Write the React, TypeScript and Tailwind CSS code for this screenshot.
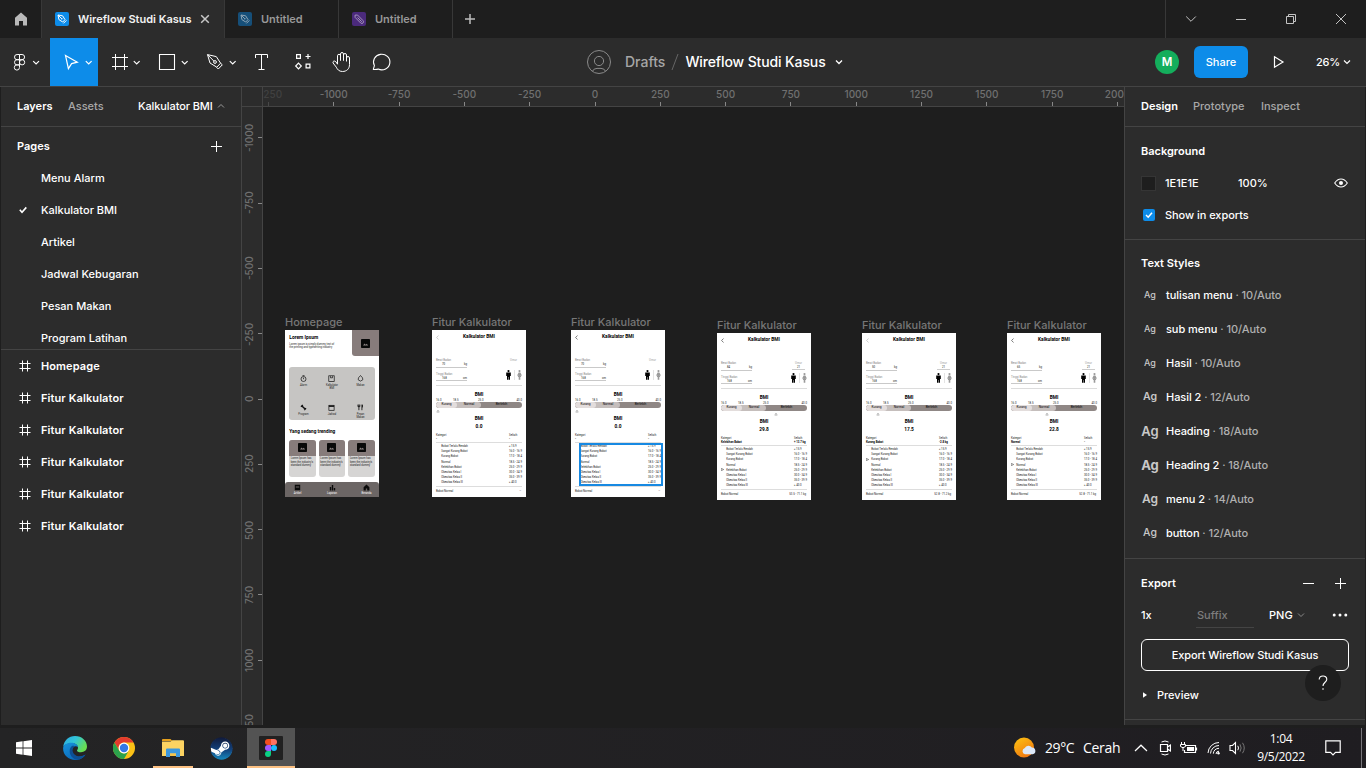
import React from "react";
import { FaSteam } from "react-icons/fa";

type SvgProps = { w: number; h: number; children: React.ReactNode; className?: string; sw?: number };
function Ico({ w, h, children, className = "", sw = 1 }: SvgProps) {
  return (
    <svg width={w} height={h} viewBox={`0 0 ${w} ${h}`} fill="none" stroke="currentColor" strokeWidth={sw} className={`block shrink-0 ${className}`}>
      {children}
    </svg>
  );
}

/* ---------- Title bar ---------- */

function FileGlyph({ kind }: { kind: "active" | "pen" | "jam" }) {
  const bg = kind === "active" ? "bg-[#0d8ce9]" : kind === "pen" ? "bg-[#164f79]" : "bg-[#4b2a7c]";
  const fg = kind === "active" ? "text-white" : kind === "pen" ? "text-[#8fa5b5]" : "text-[#a394b8]";
  return (
    <div className={`size-3.5 shrink-0 rounded-[2px] ${bg} ${fg}`}>
      {kind === "jam" ? (
        <Ico w={14} h={14}>
          <path d="M3 3.2 L5.5 3 L11 8.6 A1.6 1.6 0 0 1 8.7 11 L3.1 5.4 Z M5.5 5.5 L9.8 9.8" strokeLinejoin="round" />
        </Ico>
      ) : (
        <Ico w={14} h={14}>
          <path d="M3 3 L7.6 3.8 L10 7.6 L7.7 10 L3.9 7.6 Z M3 3 L6.6 6.6 M8.4 11.4 L11.4 8.4" strokeLinejoin="round" />
          <circle cx="6.8" cy="6.8" r="0.8" fill="currentColor" stroke="none" />
        </Ico>
      )}
    </div>
  );
}

function TitleBar() {
  return (
    <div className="flex h-[38px] shrink-0 bg-[#1e1e1e] text-[11px] font-semibold">
      <div className="flex w-[42px] shrink-0 items-center justify-center border-r border-[#383838] text-[#b9b9b9]">
        <Ico w={14} h={14}>
          <path d="M7 0.5 L13 5.7 V13.5 H9 V9 H5 V13.5 H1 V5.7 Z" fill="currentColor" stroke="none" />
        </Ico>
      </div>
      <div className="flex w-[182px] shrink-0 items-center bg-[#2c2c2c] pl-[13px] text-[#f2f2f2]">
        <FileGlyph kind="active" />
        <span className="ml-[9px] w-[113px] whitespace-nowrap">Wireflow Studi Kasus</span>
        <Ico w={10} h={10} className="ml-[9px] text-[#c8c8c8]" sw={1.5}>
          <path d="M1.2 1.2 L8.8 8.8 M8.8 1.2 L1.2 8.8" />
        </Ico>
      </div>
      <div className="flex w-[115px] shrink-0 items-center border-x border-[#383838] pl-[13px] text-[#989898]">
        <FileGlyph kind="pen" />
        <span className="ml-[9px]">Untitled</span>
      </div>
      <div className="flex w-[114px] shrink-0 items-center border-r border-[#383838] pl-[13px] text-[#989898]">
        <FileGlyph kind="jam" />
        <span className="ml-[9px]">Untitled</span>
      </div>
      <div className="flex w-[34px] items-center justify-center text-[#bdbdbd]">
        <Ico w={10} h={10} sw={1.5}>
          <path d="M5 0 V10 M0 5 H10" />
        </Ico>
      </div>
      <div className="ml-auto flex w-[201px] items-center border-l border-[#383838] text-[#c4c4c4]">
        <div className="flex w-[50px] justify-center"><Ico w={12} h={12}><path d="M1.2 3.5 L6 8.3 L10.8 3.5" /></Ico></div>
        <div className="flex w-[50px] justify-center"><Ico w={12} h={12}><path d="M1 6.5 H11" /></Ico></div>
        <div className="flex w-[50px] justify-center"><Ico w={12} h={12}><path d="M1.5 3.5 H8.5 V10.5 H1.5 Z M3.5 3.5 V1.5 H10.5 V8.5 H8.5" /></Ico></div>
        <div className="flex w-[50px] justify-center"><Ico w={12} h={12}><path d="M1 1 L11 11 M11 1 L1 11" /></Ico></div>
      </div>
    </div>
  );
}

/* ---------- Toolbar ---------- */

const CHEV = "M35.8 23.1 L38.7 25.9 L41.6 23.1";

function ToolBar() {
  return (
    <div className="flex h-[49px] shrink-0 items-center border-b border-[#444] bg-[#2c2c2c] text-white">
      <div className="flex w-[586px] shrink-0 pl-0.5">
        <Ico w={48} h={48}>
          <path d="M17.5 16.5 H15.1 a2.6 2.6 0 0 0 0 5.2 H17.5 Z M17.5 16.5 H20 a2.6 2.6 0 0 1 0 5.2 H17.5 M17.5 21.7 H15.1 a2.6 2.6 0 0 0 0 5.2 H17.5 Z M17.5 26.9 H15.1 a2.6 2.6 0 1 0 2.4 2.6 Z" />
          <circle cx="20.1" cy="24.3" r="2.6" />
          <path d="M31.2 23.1 L34.1 25.9 L37 23.1" strokeWidth="1.2" />
        </Ico>
        <div className="bg-[#0d8ce9]">
          <Ico w={48} h={48}>
            <path d="M15.5 17.5 L27.3 24.2 L21.6 25.6 L18.4 30.6 Z" strokeWidth="1.2" strokeLinejoin="miter" />
            <path d={CHEV} strokeWidth="1.2" />
          </Ico>
        </div>
        <Ico w={48} h={48}>
          <path d="M17.5 16 V32 M26.5 16 V32 M14 19.5 H30 M14 28.5 H30" />
          <path d={CHEV} strokeWidth="1.2" />
        </Ico>
        <Ico w={48} h={48}>
          <path d="M13.5 16.5 H28.5 V31.5 H13.5 Z" strokeWidth="1.1" />
          <path d={CHEV} strokeWidth="1.2" />
        </Ico>
        <Ico w={48} h={48}>
          <path d="M13.5 16.6 L22.3 18.6 L26.6 25.2 L22.8 29.2 L16 25 Z M13.5 16.6 L20 23.2 M22.6 29.3 L24.3 31 L28.3 26.8 L26.6 25.2" strokeLinejoin="round" />
          <circle cx="21" cy="24" r="1.4" />
          <path d={CHEV} strokeWidth="1.2" />
        </Ico>
        <Ico w={40} h={48}>
          <path d="M13.5 20 V16.5 H25.5 V20 M19.5 16.5 V31.5 M16.5 31.5 H22.5" />
        </Ico>
        <Ico w={40} h={48} sw={1.2}>
          <path d="M14.6 16.6 H18.4 V20.4 H14.6 Z M24.1 26.1 H27.9 V29.9 H24.1 Z M26 16 V21 M23.5 18.5 H28.5 M16.5 25.2 L19.3 28 L16.5 30.8 L13.7 28 Z" />
        </Ico>
        <Ico w={40} h={48}>
          <path d="M15.5 24 V17.8 a1.5 1.5 0 0 1 3 0 V22.5 M18.5 22.5 V16 a1.5 1.5 0 0 1 3 0 V22.5 M21.5 22.5 V17 a1.5 1.5 0 0 1 3 0 V23.5 M24.5 20 a1.5 1.5 0 0 1 3 0 V26.5 C27.5 31 24.5 33.5 20.5 33.5 C17 33.5 15.4 31.5 14.3 29.2 L11 24.9 C10.4 23.2 12.6 22.3 13.8 23.7 L15.5 26.2 V23" strokeLinejoin="round" />
        </Ico>
        <Ico w={40} h={48}>
          <path d="M11.3 31.4 L12.4 27.6 A8.2 7.8 0 1 1 16.2 31.1 Q14.4 31.6 11.3 31.4 Z" strokeLinejoin="round" strokeWidth="1.1" />
        </Ico>
      </div>
      <div className="flex items-center text-[14px]">
        <Ico w={26} h={26} className="text-[#8a8a8a]">
          <circle cx="13" cy="13" r="11.5" />
          <circle cx="13" cy="12" r="4.6" />
          <path d="M6.5 22.3 Q7.5 19.4 11 19.4 H15 Q18.5 19.4 19.5 22.3" />
        </Ico>
        <span className="ml-[13px] text-[#a6a6a6]">Drafts</span>
        <Ico w={8} h={18} className="ml-[6px] text-[#666]"><path d="M7 1 L1 17" /></Ico>
        <span className="ml-[6px] w-[141px] whitespace-nowrap tracking-[-0.12px]">Wireflow Studi Kasus</span>
        <Ico w={8} h={6} className="ml-[9px]"><path d="M1 1.5 L4 4.5 L7 1.5" strokeWidth="1.3" /></Ico>
      </div>
      <div className="ml-auto flex items-center">
        <div className="flex size-6 items-center justify-center rounded-full bg-[#14ae5c] text-[11.5px] font-semibold">M</div>
        <div className="ml-[15px] flex h-8 w-[54px] items-center justify-center rounded-md bg-[#0d8ce9] text-[11px] font-medium">Share</div>
        <Ico w={12} h={14} className="ml-[25px]"><path d="M1.5 1.8 L10 7 L1.5 12.2 Z" strokeWidth="1.2" /></Ico>
        <span className="ml-[31px] w-[23px] whitespace-nowrap text-[11px] tracking-[-0.2px]">26%</span>
        <Ico w={8} h={6} className="mr-[15px] ml-1"><path d="M1 1.5 L4 4.5 L7 1.5" strokeWidth="1.2" /></Ico>
      </div>
    </div>
  );
}

/* ---------- Left panel ---------- */

const PAGES = ["Menu Alarm", "Kalkulator BMI", "Artikel", "Jadwal Kebugaran", "Pesan Makan", "Program Latihan"];
const LAYERS = ["Homepage", "Fitur Kalkulator", "Fitur Kalkulator", "Fitur Kalkulator", "Fitur Kalkulator", "Fitur Kalkulator"];

function LeftPanel() {
  return (
    <div className="flex w-[242px] shrink-0 flex-col border-r border-l border-r-[#444] border-l-[#1e1e1e] bg-[#2c2c2c] text-white">
      <div className="flex h-10 shrink-0 items-center border-b border-[#444] pb-0.5 pl-4">
        <span className="w-[51px] font-semibold">Layers</span>
        <span className="w-[70px] font-medium text-[#a8a8a8]">Assets</span>
        <span className="whitespace-nowrap font-medium tracking-[-0.1px]">Kalkulator BMI</span>
        <Ico w={8} h={6} className="ml-1 text-[#999]"><path d="M1 4.5 L4 1.5 L7 4.5" /></Ico>
      </div>
      <div className="h-[222px] shrink-0 overflow-hidden pt-[3px]">
        <div className="flex h-8 items-center justify-between pr-[19px] pl-4 font-semibold">
          Pages
          <Ico w={11} h={11}><path d="M5.5 0 V11 M0 5.5 H11" /></Ico>
        </div>
        {PAGES.map((p, i) => (
          <div key={p} className="flex h-8 items-center pl-[18px]">
            <div className="w-[22px]">
              {i === 1 && <Ico w={8} h={8} sw={1.6}><path d="M0.8 3.8 L3 6.2 L7.3 1.4" /></Ico>}
            </div>
            {p}
          </div>
        ))}
      </div>
      <div className="flex-1 border-t border-[#444] tracking-[0.1px]">
        {LAYERS.map((l, i) => (
          <div key={i} className="flex h-8 items-center pl-[18px] font-semibold">
            <Ico w={12} h={12} className="mr-2.5"><path d="M3.5 0.5 V11.5 M8.5 0.5 V11.5 M0.5 3.5 H11.5 M0.5 8.5 H11.5" /></Ico>
            {l}
          </div>
        ))}
      </div>
    </div>
  );
}

/* ---------- Artboards ---------- */

type Calc = {
  value: string;
  category: string;
  diff: string;
  weight: string;
  height: string;
  age: string;
  pick: number;
  pointer: number;
  range: string;
  faintBack?: boolean;
  selected?: boolean;
};

const ROWS: [string, string][] = [
  ["Bobot Terlalu Rendah", "≤ 15.9"],
  ["Sangat Kurang Bobot", "16.0 - 16.9"],
  ["Kurang Bobot", "17.0 - 18.4"],
  ["Normal", "18.5 - 24.9"],
  ["Kelebihan Bobot", "25.0 - 29.9"],
  ["Obesitas Kelas I", "30.0 - 34.9"],
  ["Obesitas Kelas II", "35.0 - 39.9"],
  ["Obesitas Kelas III", "≥ 40.0"],
];

function Person({ female }: { female?: boolean }) {
  return (
    <svg width="5" height="10" viewBox="0 0 5 10" className={`block ${female ? "text-[#9a9a9a]" : "text-black"}`} fill="currentColor">
      <circle cx="2.5" cy="1.1" r="1.1" />
      {female ? <path d="M1.6 2.5 H3.4 L4.9 5.4 L4.1 5.7 L3.6 4.8 L4.2 7 H3.3 V9.8 H1.7 V7 H0.8 L1.4 4.8 L0.9 5.7 L0.1 5.4 Z" /> : <path d="M0.2 2.6 H4.8 V6 H4 V9.8 H2.7 V7 H2.3 V9.8 H1 V6 H0.2 Z" />}
    </svg>
  );
}

function Field({ label, value, unit }: { label: string; value: string; unit: string }) {
  return (
    <div className="h-[9.5px] w-[31px] border-b border-[#c9c9c9]">
      <div className="h-[4px] leading-[4px] text-[#888]">{label}</div>
      <div className="flex h-[4px] leading-[4px]">
        <span className="w-[26px] pl-[6px]">{value}</span>
        <span className="pl-[2px]">{unit}</span>
      </div>
    </div>
  );
}

function Calculator(c: Calc) {
  return (
    <div className="relative h-[167px] w-[94px] overflow-hidden bg-white px-[4px] font-[Roboto,sans-serif] text-[2.8px] leading-[4px] font-normal tracking-normal text-[#222]">
      <div className="flex h-[14px] items-center">
        <svg width="3" height="5" viewBox="0 0 3 5" className={`block ${c.faintBack ? "text-[#bbb]" : "text-[#444]"}`} fill="none" stroke="currentColor" strokeWidth="0.7"><path d="M2.5 0.5 L0.6 2.5 L2.5 4.5" /></svg>
        <div className="flex-1 pr-[3px] text-center text-[4.8px] font-bold text-black">Kalkulator BMI</div>
      </div>
      <div className="flex h-[42px] justify-between border-b border-[#dcdcdc] pt-[14px]">
        <div className="flex flex-col gap-[4px]">
          <Field label="Berat Badan" value={c.weight} unit="kg" />
          <Field label="Tinggi Badan" value={c.height} unit="cm" />
        </div>
        <div className="w-[16px]">
          <div className={`ml-[1px] h-[9px] w-[13px] text-center ${c.age ? "border-b border-[#ccc]" : ""}`}>
            <div className="h-[4px] text-[#999]">Umur</div>
            <div className="h-[4px]">{c.age}</div>
          </div>
          <div className="mt-[2.5px] flex justify-between">
            <Person />
            <div className="h-[10px] w-px bg-[#e4e4e4]" />
            <Person female />
          </div>
        </div>
      </div>
      <div className="flex h-[12px] items-end justify-center pb-[1px] text-[4.8px] font-bold text-black">BMI</div>
      <div className="flex h-[4px] items-center">
        <span className="w-[17px]">16.0</span><span className="w-[25px]">18.5</span><span>25.0</span><span className="ml-auto">40.0</span>
      </div>
      <div className="flex h-[5.5px] overflow-hidden rounded-full bg-[#8f8785] text-center text-[3.2px] leading-[5.5px] text-black">
        <div className="w-[45px] rounded-full bg-[#c5bebc]">
          <div className="flex h-full">
            <div className="w-[21px] rounded-full bg-[#e3dddc]">Kurang</div>
            <div className="flex-1">Normal</div>
          </div>
        </div>
        <div className="flex-1">Berlebih</div>
      </div>
      <div className="h-[7px] pt-[1px]">
        <svg width="86" height="5" viewBox="0 0 86 5" className="block"><path d={`M${c.pointer} 1 l1.2 2.2 h-2.4 Z`} fill="none" stroke="#888" strokeWidth="0.5" /></svg>
      </div>
      <div className="h-[7px] text-center text-[4.8px] leading-[7px] font-bold text-black">BMI</div>
      <div className="h-[10px] text-center text-[4.8px] leading-[10px] font-bold text-black">{c.value}</div>
      <div className="flex h-[5px] items-center pt-[1px]"><span className="w-[73px]">Kategori</span>Selisih</div>
      <div className="flex h-[6px] items-center border-b border-[#ddd] font-bold text-black"><span className="w-[73px]">{c.category}</span><span className="whitespace-nowrap">{c.diff}</span></div>
      <div className="h-[44.7px] border-b border-[#ddd] pt-[1px]">
        {ROWS.map(([name, range], i) => (
          <div key={name} className="flex h-[5.2px] items-center">
            <span className="w-[5.3px]">
              {i === c.pick && <svg width="3" height="3" viewBox="0 0 3 3" className="block"><path d="M0.3 0.3 L2.7 1.5 L0.3 2.7 Z" fill="none" stroke="#333" strokeWidth="0.5" /></svg>}
            </span>
            <span className="w-[67.7px]">{name}</span>
            <span className="whitespace-nowrap">{range}</span>
          </div>
        ))}
      </div>
      <div className="flex h-[7px] items-center justify-between"><span>Bobot Normal</span><span className="pr-[1px]">{c.range}</span></div>
      {c.selected && <div className="absolute top-[113px] left-[8px] h-[43px] w-[84px] border-2 border-[#1789e2]" />}
    </div>
  );
}

function Picture() {
  return (
    <svg width="9" height="9" viewBox="0 0 9 9" className="block"><rect width="9" height="9" rx="0.8" fill="#080808" /><path d="M2 6.5 L3.5 4.6 L4.6 5.8 L5.7 4.8 L7.2 6.5 Z" fill="#8a8180" /></svg>
  );
}

const MENU: { label: string; icon: React.ReactNode }[] = [
  { label: "Alarm", icon: <><circle cx="3.5" cy="4" r="2.5" /><path d="M2.5 0.6 H4.5 M3.5 2.6 V4.2" /></> },
  { label: "Kalkulator BMI", icon: <><rect x="0.8" y="0.8" width="5.4" height="5.6" /><path d="M2.5 1.2 V2.8 H4.5 V1.2" /></> },
  { label: "Makan", icon: <path d="M3.5 0.5 Q6.4 3 5.8 4.8 Q3.5 7.4 1.2 4.8 Q0.6 3 3.5 0.5 Z" /> },
  { label: "Program", icon: <path d="M1 2.8 L2.8 1 M1.9 1.9 L5.1 5.1 M4.2 6 L6 4.2" strokeWidth="1.4" /> },
  { label: "Jadwal", icon: <><rect x="0.9" y="1.3" width="5.2" height="5" /><path d="M0.9 2.2 H6.1" strokeWidth="1.4" /></> },
  { label: "Pesan Makan", icon: <path d="M1.8 0.6 V6.6 M0.8 0.6 V2.8 H2.8 V0.6 M5 0.6 V6.6 M5.6 0.8 V3.6" strokeWidth="0.9" /> },
];

function HomeBoard() {
  return (
    <div className="h-[167px] w-[94px] overflow-hidden bg-white font-[Roboto,sans-serif] text-[2.7px] leading-[3.2px] font-normal tracking-normal text-[#222]">
      <div className="flex h-[37px] justify-between">
        <div className="pt-[4px] pl-[4.3px]">
          <div className="h-[8.5px] text-[4.9px] leading-[6px] font-bold text-black">Lorem Ipsum</div>
          <div className="whitespace-nowrap">Lorem ipsum is simply dummy text of<br />the printing and typesetting industry</div>
        </div>
        <div className="flex h-[26px] w-[27.5px] items-center justify-center rounded-bl-[3px] bg-[#877c7b]"><Picture /></div>
      </div>
      <div className="mx-[4.2px] grid h-[52.7px] grid-cols-3 grid-rows-[29px_23px] rounded-[3px] bg-[#c6c5c3]">
        {MENU.map((m) => (
          <div key={m.label} className="flex flex-col items-center pt-[8px] text-center">
            <svg width="7" height="7" viewBox="0 0 7 7" fill="none" stroke="#111" strokeWidth="0.7" className="mb-[2px] block">{m.icon}</svg>
            <div className="w-[14px]">{m.label}</div>
          </div>
        ))}
      </div>
      <div className="h-[20px] pt-[9.5px] pl-[4.3px] text-[4.7px] leading-[6px] font-bold whitespace-nowrap text-black">Yang sedang trending</div>
      <div className="flex h-[42.6px] justify-between px-[4.2px]">
        {[0, 1, 2].map((i) => (
          <div key={i} className="h-[37.6px] w-[26.4px] overflow-hidden rounded-[3px] bg-[#d6d5d4]">
            <div className="flex h-[16.4px] items-center justify-center bg-[#877c7b]"><Picture /></div>
            <div className="px-[1.5px] pt-[1.4px] whitespace-nowrap">Lorem Ipsum has<br />been the industry's<br />standard dummy</div>
          </div>
        ))}
      </div>
      <div className="flex h-[14.7px] justify-between rounded-t-[3px] bg-[#6c6665] px-[6px] pt-[2px] text-white">
        {["Artikel", "Laporan", "Beranda"].map((t, i) => (
          <div key={t} className="flex w-[13px] flex-col items-center">
            <svg width="7" height="7" viewBox="0 0 7 7" className="mb-[0.8px] block" fill="#0a0a0a">
              {i === 0 && <path d="M0.8 0.8 H6.2 V6.2 H0.8 Z M1.8 2 H5.2 V2.5 H1.8 Z M1.8 3.5 H5.2 V4 H1.8 Z" fillRule="evenodd" />}
              {i === 1 && <path d="M0.8 3 H2.2 V6.4 H0.8 Z M2.8 1 H4.2 V6.4 H2.8 Z M4.8 4 H6.2 V6.4 H4.8 Z" />}
              {i === 2 && <path d="M3.5 0.6 L6.4 3.2 V6.4 H4.2 V4.4 H2.8 V6.4 H0.6 V3.2 Z" />}
            </svg>
            {t}
          </div>
        ))}
      </div>
    </div>
  );
}

const base: Calc = { value: "0.0", category: "-", diff: "-", weight: "70", height: "168", age: "", pick: -1, pointer: 2, range: "--" };
const BOARDS: { x: number; y: number; calc: Calc }[] = [
  { x: 169, y: 207, calc: { ...base, faintBack: true } },
  { x: 308, y: 207, calc: { ...base, selected: true } },
  { x: 454, y: 210, calc: { ...base, value: "29.8", category: "Kelebihan Bobot", diff: "+ 13.7 kg", weight: "84", age: "21", pick: 4, pointer: 55, range: "53.5 - 71.1 kg" } },
  { x: 599, y: 210, calc: { ...base, value: "17.5", category: "Kurang Bobot", diff: "-2.8 kg", weight: "50", age: "21", pick: 2, pointer: 12, range: "52.8 - 71.2 kg", faintBack: true } },
  { x: 744, y: 210, calc: { ...base, value: "22.8", category: "Normal", diff: "-", weight: "65", age: "21", pick: 3, pointer: 36, range: "52.8 - 71.1 kg" } },
];

/* ---------- Canvas with rulers ---------- */

const STEP = 65.32;
const H_MARKS = [-1250, -1000, -750, -500, -250, 0, 250, 500, 750, 1000, 1250, 1500, 1750, 2000];
const V_MARKS = [-1000, -750, -500, -250, 0, 250, 500, 750, 1000, 1250];

function BoardFrame({ x, y, name, children }: { x: number; y: number; name: string; children: React.ReactNode }) {
  return (
    <div className="absolute" style={{ left: x, top: y }}>
      <div className="h-4 leading-4 whitespace-nowrap">{name}</div>
      {children}
    </div>
  );
}

function Canvas() {
  return (
    <div className="grid min-w-0 flex-1 grid-cols-[21px_1fr] grid-rows-[20px_1fr] overflow-hidden text-[10px] text-[#707070]">
      <div className="border-r border-b border-[#444] bg-[#2c2c2c]" />
      <div className="relative overflow-hidden border-b border-[#444] bg-[#2c2c2c]">
        {H_MARKS.map((m) => (
          <div key={m} className={`absolute top-0 flex h-full w-12 -translate-x-1/2 flex-col items-center justify-between ${m === -1250 ? "opacity-30" : ""}`} style={{ left: 332 + (m / 250) * STEP }}>
            <span className="leading-[14px]">{m}</span>
            <span className="h-1 w-px bg-[#888]" />
          </div>
        ))}
      </div>
      <div className="relative overflow-hidden border-r border-[#444] bg-[#2c2c2c]">
        {V_MARKS.map((m) => (
          <div key={m} className="absolute left-0 flex h-12 w-full -translate-y-1/2 items-center justify-between" style={{ top: 292 + (m / 250) * STEP }}>
            <span className="h-full w-[15px] rotate-180 text-center leading-[15px] [writing-mode:vertical-rl]">{m}</span>
            <span className="h-px w-1 bg-[#888]" />
          </div>
        ))}
      </div>
      <div className="relative overflow-hidden bg-[#1e1e1e] text-[11px] text-[#777]">
        <BoardFrame x={22} y={207} name="Homepage"><HomeBoard /></BoardFrame>
        {BOARDS.map((b) => (
          <BoardFrame key={b.x} x={b.x} y={b.y} name="Fitur Kalkulator"><Calculator {...b.calc} /></BoardFrame>
        ))}
      </div>
    </div>
  );
}

/* ---------- Right panel ---------- */

const STYLES = [
  { name: "tulisan menu", size: 10, ag: "text-[9px]" },
  { name: "sub menu", size: 10, ag: "text-[9px]" },
  { name: "Hasil", size: 10, ag: "text-[9px] font-medium" },
  { name: "Hasil 2", size: 12, ag: "text-[10.5px] font-semibold" },
  { name: "Heading", size: 18, ag: "text-[13px] font-semibold" },
  { name: "Heading 2", size: 18, ag: "text-[13px] font-bold" },
  { name: "menu 2", size: 14, ag: "text-[12px] font-semibold" },
  { name: "button", size: 12, ag: "text-[10.5px] font-medium" },
];

function RightPanel() {
  return (
    <div className="relative flex w-[242px] shrink-0 flex-col border-r border-l border-r-[#1e1e1e] border-l-[#444] bg-[#2c2c2c] text-white">
      <div className="flex h-10 shrink-0 items-center border-b border-[#444] pb-0.5 pl-4 font-medium text-[#a8a8a8]">
        <span className="w-[52px] font-semibold text-white">Design</span>
        <span className="w-[68px]">Prototype</span>
        <span>Inspect</span>
      </div>
      <div className="border-b border-[#444] py-2">
        <div className="flex h-8 items-center pl-4 font-semibold">Background</div>
        <div className="flex h-8 items-center pl-4">
          <div className="size-[15px] border border-[#353535] bg-[#1e1e1e]" />
          <span className="ml-[9px] w-[73px]">1E1E1E</span>
          <span>100%</span>
          <Ico w={14} h={10} className="mr-[17px] ml-auto">
            <path d="M0.7 5 Q3.3 1 7 1 Q10.7 1 13.3 5 Q10.7 9 7 9 Q3.3 9 0.7 5 Z" strokeWidth="1.1" />
            <circle cx="7" cy="5" r="2" fill="currentColor" stroke="none" />
          </Ico>
        </div>
        <div className="flex h-8 items-center pl-[18px]">
          <div className="flex size-3 items-center justify-center rounded-[2px] bg-[#0d8ce9]">
            <Ico w={8} h={8} sw={1.5}><path d="M1 4 L3.2 6.2 L7 1.8" /></Ico>
          </div>
          <span className="ml-[10px] tracking-[-0.05px]">Show in exports</span>
        </div>
      </div>
      <div className="h-[319px] shrink-0 border-b border-[#444] pt-[7px]">
        <div className="-mb-px flex h-8 items-center pl-4 font-semibold">Text Styles</div>
        {STYLES.map((s) => (
          <div key={s.name} className="flex h-[34px] items-center pl-4">
            <span className={`w-[18px] text-center text-[#c8c8c8] ${s.ag}`}>Ag</span>
            <span className="ml-[7px] whitespace-pre tracking-[-0.05px]">{s.name}<span className="text-[#b0b0b0]"> · {s.size}/Auto</span></span>
          </div>
        ))}
      </div>
      <div className="border-b border-[#444] py-2">
        <div className="flex h-8 items-center pl-4 font-semibold">
          Export
          <Ico w={11} h={11} className="ml-auto"><path d="M0 5.5 H11" /></Ico>
          <Ico w={11} h={11} className="mr-[19px] ml-[21px]"><path d="M5.5 0 V11 M0 5.5 H11" /></Ico>
        </div>
        <div className="flex h-8 items-center pl-4">
          <span className="w-[55px]">1x</span>
          <span className="flex h-[29px] w-[58px] items-center self-start border-b border-[#444] pt-[3px] pl-px text-[#7d7d7d]">Suffix</span>
          <span className="ml-[15px]">PNG</span>
          <Ico w={8} h={6} className="ml-1 text-[#888]"><path d="M1 1.5 L4 4.5 L7 1.5" /></Ico>
          <Ico w={16} h={4} className="mr-[17px] ml-auto"><path d="M0.7 2 a1.5 1.5 0 1 0 3 0 a1.5 1.5 0 1 0 -3 0 M6.5 2 a1.5 1.5 0 1 0 3 0 a1.5 1.5 0 1 0 -3 0 M12.3 2 a1.5 1.5 0 1 0 3 0 a1.5 1.5 0 1 0 -3 0" fill="currentColor" stroke="none" /></Ico>
        </div>
        <div className="mx-4 my-2 flex h-8 items-center justify-center rounded-md border border-white tracking-[-0.1px]">Export Wireflow Studi Kasus</div>
        <div className="flex h-8 items-center pl-[17px]">
          <Ico w={6} h={6}><path d="M1 0.3 L5 3 L1 5.7 Z" fill="currentColor" stroke="none" /></Ico>
          <span className="ml-[9px]">Preview</span>
        </div>
      </div>
      <div className="absolute top-[578px] right-6 flex size-9 items-center justify-center rounded-full bg-[#1e1e1e]">
        <Ico w={10} h={16} sw={1.1}><path d="M1.2 4.6 C1.2 -0.2 8.8 -0.2 8.8 4.3 C8.8 7.2 5 7.4 5 11" /><circle cx="5" cy="14" r="0.8" fill="currentColor" stroke="none" /></Ico>
      </div>
    </div>
  );
}

/* ---------- Taskbar ---------- */

function Cell({ children, state = "" }: { children: React.ReactNode; state?: "" | "open" | "active" }) {
  return (
    <div className={`relative ml-px flex h-full w-12 items-center justify-center ${state === "active" ? "bg-[#535353]" : ""}`}>
      {children}
      {state && <div className={`absolute bottom-0 h-0.5 bg-[#fdc183] ${state === "active" ? "inset-x-0" : "inset-x-1"}`} />}
    </div>
  );
}

function TaskBar() {
  return (
    <div className="flex h-10 shrink-0 items-center bg-linear-to-r from-[#242425] to-[#1f1d21] font-['Open_Sans','Noto_Sans',sans-serif] font-normal tracking-normal text-white">
      <div className="flex w-[50px] pl-4">
        <svg width="16" height="16" viewBox="0 0 16 16" fill="#fff"><path d="M0 2.3 L6.6 1.3 V7.6 H0 Z M7.4 1.2 L16 0 V7.6 H7.4 Z M0 8.4 H6.6 V14.7 L0 13.7 Z M7.4 8.4 H16 V16 L7.4 14.8 Z" /></svg>
      </div>
      <Cell>
        <svg width="24" height="24" viewBox="0 0 24 24">
          <defs>
            <linearGradient id="edgeTop" x1="0" y1="0" x2="1" y2="0.5"><stop offset="0" stopColor="#2ba9e4" /><stop offset="0.5" stopColor="#32c5d8" /><stop offset="1" stopColor="#68de52" /></linearGradient>
            <linearGradient id="edgeLow" x1="0" y1="0" x2="0.6" y2="1"><stop offset="0" stopColor="#1793dc" /><stop offset="1" stopColor="#0a68b8" /></linearGradient>
          </defs>
          <path d="M0.2 11 C0.8 4.5 5.8 0 12 0 C19 0 24 5 24 10.5 C24 14.2 21.2 16.2 18 16.2 C15.5 16.2 14 15.3 14 14.4 C14 13.8 15 13.4 15 11.8 C15 9.3 12.5 7.2 8.8 7.2 C4.3 7.2 1 9 0.2 11 Z" fill="url(#edgeTop)" />
          <path d="M0.1 12.5 C0.1 9 3.6 6.8 8.2 6.8 C12 6.8 14.6 8.6 15 11 C12.4 8.8 9 11 9 14.8 C9 18.6 12.5 21 16.5 20.6 C19 20.4 21 19.5 22.5 18.5 C20.5 21.8 16.8 24 12.4 24 C5.2 24 0.1 18.8 0.1 12.5 Z" fill="url(#edgeLow)" />
          <path d="M9 10 C5.8 12 5.8 18.5 9.8 21.8 C11 22.9 12.6 23.7 14.4 23.8 C18 23.4 21 21.2 22.5 18.5 C19.8 20.4 16.2 21 13.3 19.7 C9.7 18 8.2 13.8 11 10.6 C11.7 9.8 10 9.4 9 10 Z" fill="#0d4f94" />
        </svg>
      </Cell>
      <Cell>
        <svg width="22" height="22" viewBox="0 0 22 22">
          <circle cx="11" cy="11" r="11" fill="#fbc116" />
          <path d="M11 0 A11 11 0 0 1 20.53 5.5 H11 A5.5 5.5 0 0 0 6.24 13.75 L1.47 5.5 A11 11 0 0 1 11 0 Z" fill="#e33b2e" />
          <path d="M1.47 5.5 L6.24 13.75 A5.5 5.5 0 0 0 15.76 13.75 L11 22 A11 11 0 0 1 1.47 5.5 Z" fill="#2ba24c" />
          <circle cx="11" cy="11" r="5.4" fill="#fff" />
          <circle cx="11" cy="11" r="4.2" fill="#3478e5" />
        </svg>
      </Cell>
      <Cell state="open">
        <svg width="22" height="18" viewBox="0 0 22 18">
          <path d="M0 0.8 Q0 0 0.8 0 H8.5 L10.5 2 H0 Z" fill="#e5a01d" />
          <path d="M0 2.6 H8.5 L10.5 1.2 H21 Q22 1.2 22 2.2 V17 H0 Z" fill="#fcd362" />
          <path d="M4 18 V10.5 Q4 9.5 5 9.5 H17 Q18 9.5 18 10.5 V18 H14 V14.5 H8 V18 Z" fill="#3c97dd" />
          <path d="M8 14.5 H14 V17 H8 Z" fill="#f4c24b" />
        </svg>
      </Cell>
      <Cell>
        <div className="relative -left-px size-[23px]">
          <svg width="23" height="23" viewBox="0 0 23 23" className="block"><defs><linearGradient id="steamBg" x1="0" y1="0" x2="0" y2="1"><stop offset="0" stopColor="#111a3a" /><stop offset="0.55" stopColor="#12417c" /><stop offset="1" stopColor="#1788bd" /></linearGradient></defs><circle cx="11.5" cy="11.5" r="10.6" fill="#fff" /></svg>
          <FaSteam size={23} fill="url(#steamBg)" className="absolute inset-0" />
        </div>
      </Cell>
      <Cell state="active">
        <div className="flex size-6 items-center justify-center rounded-[1px] bg-[#212121]">
          <svg width="12" height="18" viewBox="0 0 12 18">
            <path d="M6 0 H3 a3 3 0 0 0 0 6 H6 Z" fill="#f24e1e" /><path d="M6 0 H9 a3 3 0 0 1 0 6 H6 Z" fill="#ff7262" />
            <path d="M6 6 H3 a3 3 0 0 0 0 6 H6 Z" fill="#a259ff" /><circle cx="9" cy="9" r="3" fill="#1abcfe" />
            <path d="M6 12 H3 a3 3 0 1 0 3 3 Z" fill="#0acf83" />
          </svg>
        </div>
      </Cell>
      <div className="ml-auto flex h-full items-center">
        <svg width="22" height="22" viewBox="0 0 22 22">
          <defs>
            <linearGradient id="sun" x1="0" y1="0" x2="0.6" y2="1"><stop offset="0" stopColor="#fdc512" /><stop offset="1" stopColor="#f0780f" /></linearGradient>
          </defs>
          <circle cx="10" cy="10.5" r="10" fill="url(#sun)" />
          <path d="M11 17.3 a3.2 3.2 0 0 1 -0.2 -6.2 a4 4 0 0 1 7 -0.7 a3.5 3.5 0 0 1 0.9 6.9 Z" fill="#dce8f8" />
        </svg>
        <span className="ml-[9px] w-[38px] text-[14px] whitespace-nowrap tracking-[-0.4px]">29°C</span>
        <span className="w-[51px] text-[14px] tracking-[-0.3px]">Cerah</span>
        <Ico w={14} h={8} sw={1.2}><path d="M1 7 L7 1.2 L13 7" /></Ico>
        <Ico w={12} h={16} className="ml-[11px]">
          <path d="M1.5 4.5 H8.5 V11.5 H1.5 Z M8.5 7 L11.5 5 V11 L8.5 9" strokeWidth="1.2" />
          <path d="M2.5 2 Q6 0 9.5 2 M2.5 14 Q6 16 9.5 14" />
        </Ico>
        <Ico w={18} h={14} className="ml-[9px]">
          <path d="M5.5 4.5 H15.5 V11.5 H4.5 V9 M16.5 6.5 V9.5" strokeWidth="1.2" />
          <path d="M7 6 H14 V10 H7 Z" fill="currentColor" stroke="none" />
          <path d="M1.5 1 V3 M4.5 1 V3 M0.5 3.5 H5.5 V5.5 Q3 8 0.5 5.5 Z M3 7 V10" />
        </Ico>
        <Ico w={14} h={14} className="ml-[9px]">
          <path d="M1 12 A11 11 0 0 1 12 1.5 M3.5 12.5 A8.5 8.5 0 0 1 12 4.5 M6.3 12.7 A6 6 0 0 1 12 7.3 M9 13 A3 3 0 0 1 12 10.2" />
          <circle cx="11.5" cy="12.3" r="1.2" fill="currentColor" stroke="none" />
        </Ico>
        <Ico w={18} h={14} className="ml-[8px]">
          <path d="M1 4.5 H3.5 L6.5 1.5 V12.5 L3.5 9.5 H1 Z" strokeWidth="1.1" />
          <path d="M8.8 4.8 Q10.2 7 8.8 9.2" />
          <path d="M11 3.3 Q13.3 7 11 10.7 M13.5 1.8 Q17 7 13.5 12.2" className="text-[#777]" />
        </Ico>
        <div className="ml-[4px] w-[60px] text-center text-[12px] leading-[18px] tracking-[-0.3px]">1:04<br />9/5/2022</div>
        <Ico w={16} h={16} className="ml-[14px]" sw={1.2}><path d="M0.8 0.8 H15.2 V12.3 H10.5 L8 14.8 L5.5 12.3 H0.8 Z" /></Ico>
        <div className="ml-5 h-full w-[5px] border-l border-[#77757a]" />
      </div>
    </div>
  );
}

export default function App() {
  return (
    <div className="flex h-[768px] w-[1366px] flex-col overflow-hidden bg-[#1e1e1e] font-[Inter,'Liberation_Sans',sans-serif] text-[11px] leading-4 font-[450] tracking-normal">
      <TitleBar />
      <ToolBar />
      <div className="mb-[3px] flex min-h-0 flex-1 overflow-hidden">
        <LeftPanel />
        <Canvas />
        <RightPanel />
      </div>
      <TaskBar />
    </div>
  );
}
